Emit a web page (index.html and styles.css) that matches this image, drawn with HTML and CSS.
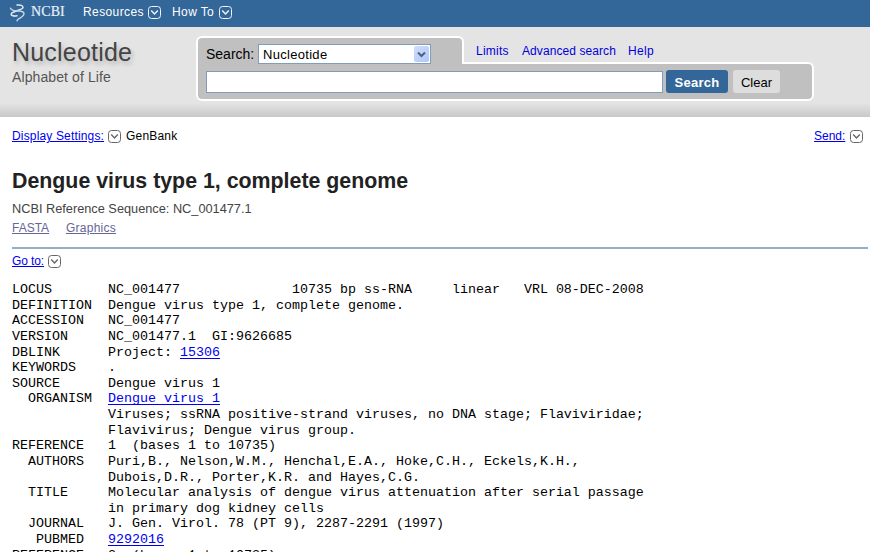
FILE: index.html
```html
<!DOCTYPE html>
<html lang="en">
<head>
<meta charset="utf-8">
<title>Dengue virus type 1, complete genome</title>
<link rel="stylesheet" href="styles.css">
</head>
<body>
<svg width="0" height="0" class="defs">
  <symbol id="drop" viewBox="0 0 13 13">
    <rect x=".5" y=".5" width="12" height="12" rx="3" fill="none" stroke="currentColor"/>
    <path d="M3.200 4.500 L6.500 7.900 L9.800 4.500" fill="none" stroke="currentColor" stroke-width="1.400"/>
  </symbol>
</svg>
<nav class="topbar">
  <svg class="logo" viewBox="0 0 16 18" width="16" height="18">
    <path d="M8 1 C12 .5 14 1.800 14 3.500 C14 6 3 7 2.200 10 C2 12 5 12.200 8 11.800" fill="none" stroke="#e2ebf4" stroke-width="1.500" stroke-linecap="round"/>
    <path d="M1.500 4.200 C2.500 7.500 8 6.800 12 7.200 C16.500 8 15.500 11.500 12 13.500 C10 14.500 8.500 15 8 16.800" fill="none" stroke="#c3d5e6" stroke-width="1.400" stroke-linecap="round"/>
  </svg>
  <span class="brand">NCBI</span>
  <span class="menu resources">Resources</span><svg class="drop"><use href="#drop"/></svg>
  <span class="menu howto">How To</span><svg class="drop"><use href="#drop"/></svg>
</nav>
<header class="header">
  <div class="db">
    <div class="db-name">Nucleotide</div>
    <div class="db-sub">Alphabet of Life</div>
  </div>
  <div class="search">
    <div class="search-top">
      <div class="tab">
        <span class="label">Search:</span>
        <div class="select"><span>Nucleotide</span><i class="select-btn"><svg width="9" height="7" viewBox="0 0 9 7"><path d="M1 1.500 L4.500 5 L8 1.500" fill="none" stroke="#4d6185" stroke-width="2"/></svg></i></div>
      </div>
      <div class="links"><a class="limits">Limits</a><a class="adv">Advanced search</a><a class="help">Help</a></div>
    </div>
    <div class="search-row">
      <div class="input"></div>
      <div class="btn go">Search</div>
      <div class="btn clear">Clear</div>
    </div>
  </div>
</header>
<main class="main">
  <div class="settings">
    <a class="ds">Display Settings:</a><svg class="drop"><use href="#drop"/></svg><span class="genbank">GenBank</span>
    <a class="send">Send:</a><svg class="drop"><use href="#drop"/></svg>
  </div>
  <h1 class="title">Dengue virus type 1, complete genome</h1>
  <p class="ref">NCBI Reference Sequence: NC_001477.1</p>
  <div class="formats"><a class="fasta">FASTA</a><a class="graphics">Graphics</a></div>
  <div class="goto"><a>Go to:</a><svg class="drop"><use href="#drop"/></svg></div>
<pre class="record">LOCUS       NC_001477              10735 bp ss-RNA     linear   VRL 08-DEC-2008
DEFINITION  Dengue virus type 1, complete genome.
ACCESSION   NC_001477
VERSION     NC_001477.1  GI:9626685
DBLINK      Project: <a>15306</a>
KEYWORDS    .
SOURCE      Dengue virus 1
  ORGANISM  <a>Dengue virus 1</a>
            Viruses; ssRNA positive-strand viruses, no DNA stage; Flaviviridae;
            Flavivirus; Dengue virus group.
REFERENCE   1  (bases 1 to 10735)
  AUTHORS   Puri,B., Nelson,W.M., Henchal,E.A., Hoke,C.H., Eckels,K.H.,
            Dubois,D.R., Porter,K.R. and Hayes,C.G.
  TITLE     Molecular analysis of dengue virus attenuation after serial passage
            in primary dog kidney cells
  JOURNAL   J. Gen. Virol. 78 (PT 9), 2287-2291 (1997)
   PUBMED   <a>9292016</a>
REFERENCE   2  (bases 1 to 10735)</pre>
</main>
</body>
</html>
```
FILE: styles.css
```css
* { box-sizing: border-box; }
body { margin: 0; height: 552px; overflow: hidden; background: #fff; color: #000; font: 12px/16px "Liberation Sans", Arial, sans-serif; }
.defs { display: none; }
.drop { width: 13px; height: 13px; flex: none; }
.topbar { height: 27px; background: #369; color: #fff; display: flex; align-items: center; padding: 0 0 3px 9px; }
.topbar .drop { color: #f0f5fa; }
.logo { margin-top: 1px; }
.brand { font: 14px/18px "Liberation Serif", serif; margin-left: 6px; width: 52px; letter-spacing: .1px; color: #e8f0f7; -webkit-text-stroke: .2px #e8f0f7; }
.menu { letter-spacing: .4px; }
.resources { width: 65px; }
.howto { width: 47px; margin-left: 11px; }
.header { height: 90px; background: linear-gradient(#e4e4e4 0, #e4e4e4 76px, #c8c8c8 90px); display: flex; padding: 9px 0 0 12px; }
.db { width: 184px; color: #444; }
.db-name { font-size: 25px; line-height: 32px; text-shadow: 2px 3px 4px #b4b4b4; letter-spacing: .2px; white-space: nowrap; }
.db-sub { font-size: 14px; line-height: 18px; color: #555; letter-spacing: .1px; }
.search { width: 618px; height: 65px; }
.search-top { display: flex; height: 28px; }
.tab { width: 268px; height: 28px; background: silver; border: 2px solid #fff; border-bottom: 0; border-radius: 6px 6px 0 0; display: flex; padding: 6px 0 0 8px; position: relative; z-index: 1; }
.label { font-size: 14px; line-height: 21px; width: 52px; }
.select { width: 173px; height: 20px; background: #fff; border: 1px solid #7f9db9; display: flex; justify-content: space-between; padding: 1px 1px 1px 4px; font-size: 13px; line-height: 18px; letter-spacing: .3px; }
.select-btn { width: 15px; height: 16px; background: linear-gradient(135deg, #d0ddfd, #b0c7f7); border-radius: 2px; display: flex; align-items: center; justify-content: center; }
.links { display: flex; padding: 7px 0 0 12px; color: #00d; }
.limits { width: 46px; letter-spacing: .25px; }
.adv { width: 106px; letter-spacing: .08px; }
.help { letter-spacing: .3px; }
.search-row { height: 39px; margin-top: -2px; background: silver; border: 2px solid #fff; border-radius: 0 6px 6px 6px; display: flex; padding: 6px 0 0 8px; }
.input { width: 457px; height: 22px; margin-top: 1px; background: #fff; border: 1px solid #7f9db9; }
.btn { height: 23px; border-radius: 3px; text-align: center; line-height: 25px; }
.go { width: 62px; margin-left: 3px; background: #369; color: #fff; font-weight: bold; font-size: 13px; letter-spacing: .3px; }
.clear { width: 47px; margin-left: 5px; background: #ddd; font-size: 13px; }
.main { padding: 11px 0 0 12px; }
.main a { color: #00e; text-decoration: underline; }
.main .drop { color: #666; }
.settings { display: flex; align-items: center; height: 16px; padding-right: 7px; }
.ds { width: 96px; letter-spacing: .16px; }
.genbank { margin-left: 5px; flex: 1; letter-spacing: .2px; }
.send { width: 36px; }
.title { margin: 23px 0 0; font-size: 21.35px; line-height: 28px; color: #222; white-space: nowrap; }
.ref { margin: 6px 0 0; font-size: 12.75px; line-height: 16px; color: #444; white-space: nowrap; }
.formats { display: flex; margin: 3px 2px 0 0; height: 29px; border-bottom: 2px solid #94aec8; }
.main .formats a { color: #669; }
.fasta { width: 54px; }
.graphics { letter-spacing: .25px; }
.goto { display: flex; align-items: center; margin-top: 4px; height: 16px; }
.goto a { width: 36px; letter-spacing: -.1px; }
.record { margin: 13px 0 0; font: 13.333px/15.63px "Liberation Mono", monospace; }
.record a { text-underline-offset: 2px; }
```
